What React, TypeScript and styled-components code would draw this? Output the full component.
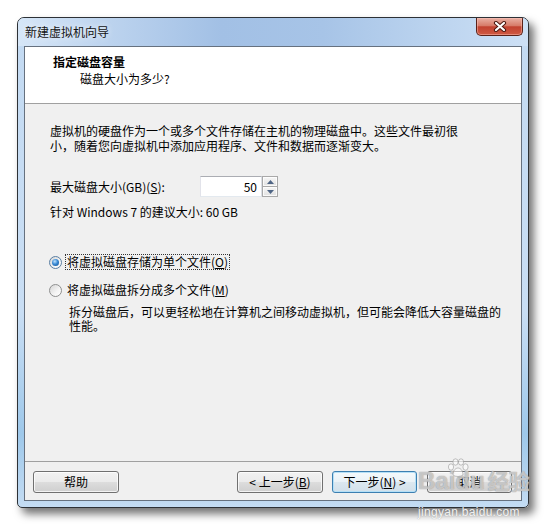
import styled, { createGlobalStyle } from 'styled-components';

const GlobalStyle = createGlobalStyle`
  html, body {
    margin: 0;
    padding: 0;
    background: #ffffff;
  }
  body {
    font-family: "Microsoft YaHei", "Noto Sans CJK SC", "Noto Sans", sans-serif;
    font-size: 12px;
    color: #000000;
  }
`;

const Page = styled.div`
  position: relative;
  width: 547px;
  height: 526px;
  padding: 17px 0 0 17px;
  box-sizing: border-box;
  overflow: hidden;
`;

const Window = styled.div`
  width: 512px;
  height: 491px;
  box-sizing: border-box;
  display: flex;
  flex-direction: column;
  border: 1px solid #2d3136;
  border-radius: 7px 7px 5px 5px;
  background: linear-gradient(to bottom, #c3daf2 0%, #c9def4 60%, #9ec8ea 85%, #c4dcf3 100%);
  box-shadow: 5px 6px 9px rgba(0, 0, 0, 0.55);
  overflow: hidden;
`;

const TitleBar = styled.div`
  height: 28px;
  flex-shrink: 0;
  display: flex;
  align-items: flex-start;
  padding-left: 7px;
  background: linear-gradient(
    to right,
    #d6e6f7 0%,
    #bcd3ee 18%,
    #a2c0e5 40%,
    #a7c4e7 60%,
    #bcd4ef 82%,
    #cde0f5 100%
  );
`;

const Title = styled.div`
  padding-top: 6px;
  line-height: 16px;
  color: #141414;
  text-shadow: 0 0 6px rgba(255, 255, 255, 0.9);
`;

const CloseButton = styled.div`
  margin-left: auto;
  margin-right: 5px;
  width: 47px;
  height: 18px;
  box-sizing: border-box;
  border: 1px solid #5a2118;
  border-top: none;
  border-radius: 0 0 5px 5px;
  background: linear-gradient(to bottom, #eab0a3 0%, #d77b69 45%, #c2412f 52%, #cf5a43 100%);
  box-shadow: inset 0 0 0 1px rgba(255, 200, 190, 0.45);
  display: flex;
  align-items: center;
  justify-content: center;
`;

const Client = styled.div`
  flex: 1;
  margin: 0 6px 6px;
  border: 1px solid #66717f;
  background: #f0f0f0;
  display: flex;
  flex-direction: column;
  min-height: 0;
`;

const Header = styled.div`
  height: 57px;
  flex-shrink: 0;
  box-sizing: border-box;
  background: #ffffff;
  border-bottom: 1px solid #a0a0a0;
  padding: 7px 0 0 28px;
`;

const HeaderTitle = styled.div`
  font-weight: bold;
  line-height: 16px;
`;

const HeaderSub = styled.div`
  margin-top: 1px;
  padding-left: 27px;
  line-height: 16px;
`;

const Body = styled.div`
  flex: 1;
  padding: 19px 25px 0;
`;

const Intro = styled.div`
  line-height: 15px;
`;

const Line = styled.div`
  white-space: nowrap;
`;

const SizeRow = styled.div`
  display: flex;
  align-items: center;
  margin-top: 23px;
  height: 21px;
`;

const SizeLabel = styled.span`
  width: 150px;
  line-height: 16px;
`;

const Key = styled.span`
  text-decoration: underline;
`;

const NumberBox = styled.div`
  width: 62px;
  height: 21px;
  box-sizing: border-box;
  border: 1px solid;
  border-color: #abadb3 #dbdfe6 #e3e9ef #e2e3ea;
  background: #ffffff;
  text-align: right;
  padding-right: 4px;
  line-height: 19px;
`;

const Spinner = styled.div`
  width: 16px;
  height: 21px;
  display: flex;
  flex-direction: column;
`;

const SpinHalf = styled.div<{ $down?: boolean }>`
  flex: 1;
  box-sizing: border-box;
  border: 1px solid #a9a9a9;
  ${({ $down }) => ($down ? 'border-top: none;' : '')}
  background: linear-gradient(to bottom, #f7f7f7, #e1e1e1);
  box-shadow: inset 0 0 0 1px rgba(255, 255, 255, 0.8);
  display: flex;
  align-items: center;
  justify-content: center;
`;

const Recommend = styled.div`
  margin-top: 7px;
  line-height: 16px;
`;

const RadioRow = styled.div<{ $gap: number }>`
  display: flex;
  align-items: center;
  height: 18px;
  margin-top: ${({ $gap }) => $gap}px;
  margin-left: -1px;
`;

const RadioCircle = styled.span<{ $checked?: boolean }>`
  width: 13px;
  height: 13px;
  box-sizing: border-box;
  border-radius: 50%;
  border: 1px solid ${({ $checked }) => ($checked ? '#5b7fa3' : '#8e8f8f')};
  background: linear-gradient(135deg, #d6d6d6 0%, #f4f4f4 60%, #ffffff 100%);
  display: flex;
  align-items: center;
  justify-content: center;

  &::after {
    content: '';
    display: ${({ $checked }) => ($checked ? 'block' : 'none')};
    width: 7px;
    height: 7px;
    border-radius: 50%;
    background: radial-gradient(circle at 40% 35%, #bfe3ff 0%, #3a8ad4 45%, #0e4a8c 100%);
  }
`;

const RadioText = styled.span<{ $focused?: boolean }>`
  margin-left: 3px;
  padding: 0 1px;
  line-height: 14px;
  border: 1px dotted ${({ $focused }) => ($focused ? '#333333' : 'transparent')};
`;

const Description = styled.div`
  margin-top: 6px;
  padding-left: 19px;
  line-height: 14px;
`;

const Footer = styled.div`
  height: 39px;
  flex-shrink: 0;
  box-sizing: border-box;
  border-top: 1px solid #a0a0a0;
  display: flex;
  align-items: flex-start;
  padding: 9px 9px 0 8px;
`;

const Button = styled.div<{ $width: number; $gap?: number; $default?: boolean }>`
  width: ${({ $width }) => $width}px;
  height: 22px;
  margin-left: ${({ $gap }) => $gap ?? 0}px;
  box-sizing: border-box;
  border: 1px solid ${({ $default }) => ($default ? '#3c7fb1' : '#707070')};
  border-radius: 3px;
  background: ${({ $default }) =>
    $default
      ? 'linear-gradient(to bottom, #f4f9fc 0%, #eaf2f7 49%, #dce8f0 50%, #d2e0ea 100%)'
      : 'linear-gradient(to bottom, #f2f2f2 0%, #ebebeb 49%, #dddddd 50%, #cfcfcf 100%)'};
  box-shadow: inset 0 0 0 1px ${({ $default }) => ($default ? '#b5e0f7' : 'rgba(255, 255, 255, 0.75)')};
  display: flex;
  align-items: center;
  justify-content: center;
  line-height: 16px;
`;

const Spacer = styled.div`
  flex: 1;
`;

const Watermark = styled.div`
  position: absolute;
  left: 418px;
  top: 466px;
  display: flex;
  flex-direction: column;
  align-items: flex-start;
  pointer-events: none;
`;

const MarkLogo = styled.div`
  position: relative;
  display: flex;
  align-items: baseline;
  font-family: "Liberation Sans", Arial, sans-serif;
  font-size: 24px;
  font-weight: bold;
  line-height: 28px;
  color: rgba(255, 255, 255, 0.5);
  text-shadow: 0 0 1px rgba(120, 120, 120, 0.75), 0 0 1px rgba(150, 150, 150, 0.5);
`;

const MarkCn = styled.span`
  margin-left: 3px;
  font-family: "Noto Sans CJK SC", sans-serif;
  font-size: 21px;
  font-weight: bold;
`;

const Paw = styled.svg`
  position: absolute;
  left: 29px;
  top: -8px;
`;

const MarkUrl = styled.div`
  margin-top: 10px;
  font-family: "Liberation Sans", Arial, sans-serif;
  font-size: 12px;
  line-height: 14px;
  letter-spacing: 0.3px;
  color: rgba(255, 255, 255, 0.9);
  text-shadow: 0 0 1px rgba(120, 120, 120, 0.7);
`;

const CloseGlyph = () => (
  <svg width="14" height="11" viewBox="0 0 14 11">
    <path d="M3 2 L11 9 M11 2 L3 9" stroke="#4d1a12" strokeWidth="4.2" strokeLinecap="round" />
    <path d="M3 2 L11 9 M11 2 L3 9" stroke="#ffffff" strokeWidth="2.2" strokeLinecap="round" />
  </svg>
);

const Arrow = ({ down }: { down?: boolean }) => (
  <svg width="7" height="4" viewBox="0 0 7 4">
    <path d={down ? 'M0 0 H7 L3.5 4 Z' : 'M0 4 H7 L3.5 0 Z'} fill="#4f6585" />
  </svg>
);

const PawMark = () => (
  <Paw width="22" height="20" viewBox="0 0 22 20">
    <g fill="rgba(255,255,255,0.55)" stroke="rgba(140,140,140,0.65)" strokeWidth="0.8">
      <ellipse cx="4" cy="9" rx="2.6" ry="3.2" />
      <ellipse cx="8.5" cy="4" rx="2.6" ry="3.2" />
      <ellipse cx="14" cy="4" rx="2.6" ry="3.2" />
      <ellipse cx="18.5" cy="9" rx="2.6" ry="3.2" />
      <path d="M6 17 C6 12 9 10 11 10 C13 10 16 12 16 17 C14 19 8 19 6 17 Z" />
    </g>
  </Paw>
);

export default function App() {
  return (
    <Page>
      <GlobalStyle />
      <Window>
        <TitleBar>
          <Title>新建虚拟机向导</Title>
          <CloseButton>
            <CloseGlyph />
          </CloseButton>
        </TitleBar>

        <Client>
          <Header>
            <HeaderTitle>指定磁盘容量</HeaderTitle>
            <HeaderSub>磁盘大小为多少?</HeaderSub>
          </Header>

          <Body>
            <Intro>
              <Line>虚拟机的硬盘作为一个或多个文件存储在主机的物理磁盘中。这些文件最初很</Line>
              <Line>小，随着您向虚拟机中添加应用程序、文件和数据而逐渐变大。</Line>
            </Intro>

            <SizeRow>
              <SizeLabel>
                最大磁盘大小(GB)(<Key>S</Key>):
              </SizeLabel>
              <NumberBox>50</NumberBox>
              <Spinner>
                <SpinHalf>
                  <Arrow />
                </SpinHalf>
                <SpinHalf $down>
                  <Arrow down />
                </SpinHalf>
              </Spinner>
            </SizeRow>

            <Recommend>针对 Windows 7 的建议大小: 60 GB</Recommend>

            <RadioRow $gap={33}>
              <RadioCircle $checked />
              <RadioText $focused>
                将虚拟磁盘存储为单个文件(<Key>O</Key>)
              </RadioText>
            </RadioRow>

            <RadioRow $gap={10}>
              <RadioCircle />
              <RadioText>
                将虚拟磁盘拆分成多个文件(<Key>M</Key>)
              </RadioText>
            </RadioRow>

            <Description>
              <Line>拆分磁盘后，可以更轻松地在计算机之间移动虚拟机，但可能会降低大容量磁盘的</Line>
              <Line>性能。</Line>
            </Description>
          </Body>

          <Footer>
            <Button $width={86}>帮助</Button>
            <Spacer />
            <Button $width={86}>
              &lt; 上一步(<Key>B</Key>)
            </Button>
            <Button $width={85} $gap={9} $default>
              下一步(<Key>N</Key>) &gt;
            </Button>
            <Button $width={85} $gap={10}>
              取消
            </Button>
          </Footer>
        </Client>
      </Window>

      <Watermark>
        <MarkLogo>
          <PawMark />
          Baidu<MarkCn>经验</MarkCn>
        </MarkLogo>
        <MarkUrl>jingyan.baidu.com</MarkUrl>
      </Watermark>
    </Page>
  );
}
